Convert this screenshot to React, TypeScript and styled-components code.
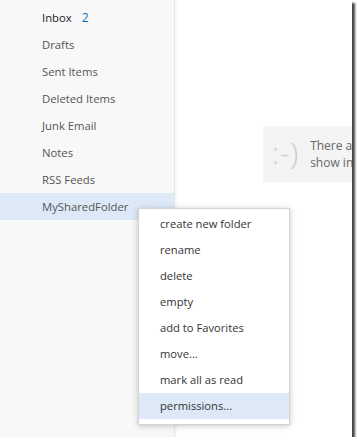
import React from 'react';
import styled, { createGlobalStyle } from 'styled-components';

const GlobalStyle = createGlobalStyle`
  html, body {
    margin: 0;
    padding: 0;
    background: #fff;
  }
  body {
    font-family: 'Open Sans', 'Noto Sans', sans-serif;
  }
`;

const Frame = styled.div`
  width: 352px;
  height: 437px;
  display: flex;
  position: relative;
  overflow: hidden;
  background: #fff;
  box-shadow: 3px 3px 2px rgba(40, 40, 40, 0.85);
`;

const Sidebar = styled.nav`
  width: 175px;
  flex-shrink: 0;
  padding-top: 4px;
  box-sizing: border-box;
  background: #f8f8f8;
  border-right: 1px solid #e6e6e6;
  box-shadow: 1px 0 2px rgba(0, 0, 0, 0.06);
`;

const Folder = styled.div<{ $selected?: boolean; $bold?: boolean }>`
  height: 27px;
  line-height: 27px;
  padding-left: 42px;
  font-size: 11.3px;
  color: ${(p) => (p.$bold ? '#222' : '#555')};
  background: ${(p) => (p.$selected ? '#dde9f7' : 'transparent')};
  white-space: nowrap;
`;

const Count = styled.span`
  color: #0072c6;
  margin-left: 10px;
  font-size: 12px;
`;

const Main = styled.main`
  flex: 1;
  padding-top: 126px;
  padding-left: 88px;
  overflow: hidden;
`;

const EmptyNote = styled.div`
  height: 56px;
  width: 200px;
  display: flex;
  align-items: center;
  gap: 11px;
  padding-left: 9px;
  background: #f4f4f4;
  box-sizing: border-box;
`;

const Smiley = styled.span`
  font-size: 29px;
  line-height: 1;
  color: #cbcbcb;
  letter-spacing: 1px;
  font-weight: 300;
  margin-top: -3px;
`;

const NoteText = styled.div`
  font-size: 12px;
  line-height: 17px;
  color: #666;
  white-space: nowrap;
`;

const Menu = styled.ul`
  position: absolute;
  left: 138px;
  top: 208px;
  width: 152px;
  margin: 0;
  padding: 2px 0 5px;
  list-style: none;
  background: #fff;
  border: 1px solid #d4d4d4;
  box-sizing: border-box;
  box-shadow: 0 1px 6px rgba(0, 0, 0, 0.22);
`;

const MenuItem = styled.li<{ $active?: boolean }>`
  height: 26px;
  line-height: 26px;
  padding-left: 21px;
  font-size: 11.2px;
  color: #333;
  background: ${(p) => (p.$active ? '#dde9f7' : 'transparent')};
`;

const folders = ['Drafts', 'Sent Items', 'Deleted Items', 'Junk Email', 'Notes', 'RSS Feeds'];

const menuItems = [
  'create new folder',
  'rename',
  'delete',
  'empty',
  'add to Favorites',
  'move...',
  'mark all as read',
  'permissions...',
];

export default function App() {
  return (
    <>
      <GlobalStyle />
      <Frame>
        <Sidebar>
          <Folder $bold>
            Inbox<Count>2</Count>
          </Folder>
          {folders.map((f) => (
            <Folder key={f}>{f}</Folder>
          ))}
          <Folder $selected>MySharedFolder</Folder>
        </Sidebar>
        <Main>
          <EmptyNote>
            <Smiley>:-)</Smiley>
            <NoteText>
              There are no items to
              <br />
              show in this view.
            </NoteText>
          </EmptyNote>
        </Main>
        <Menu>
          {menuItems.map((m) => (
            <MenuItem key={m} $active={m === 'permissions...'}>
              {m}
            </MenuItem>
          ))}
        </Menu>
      </Frame>
    </>
  );
}
